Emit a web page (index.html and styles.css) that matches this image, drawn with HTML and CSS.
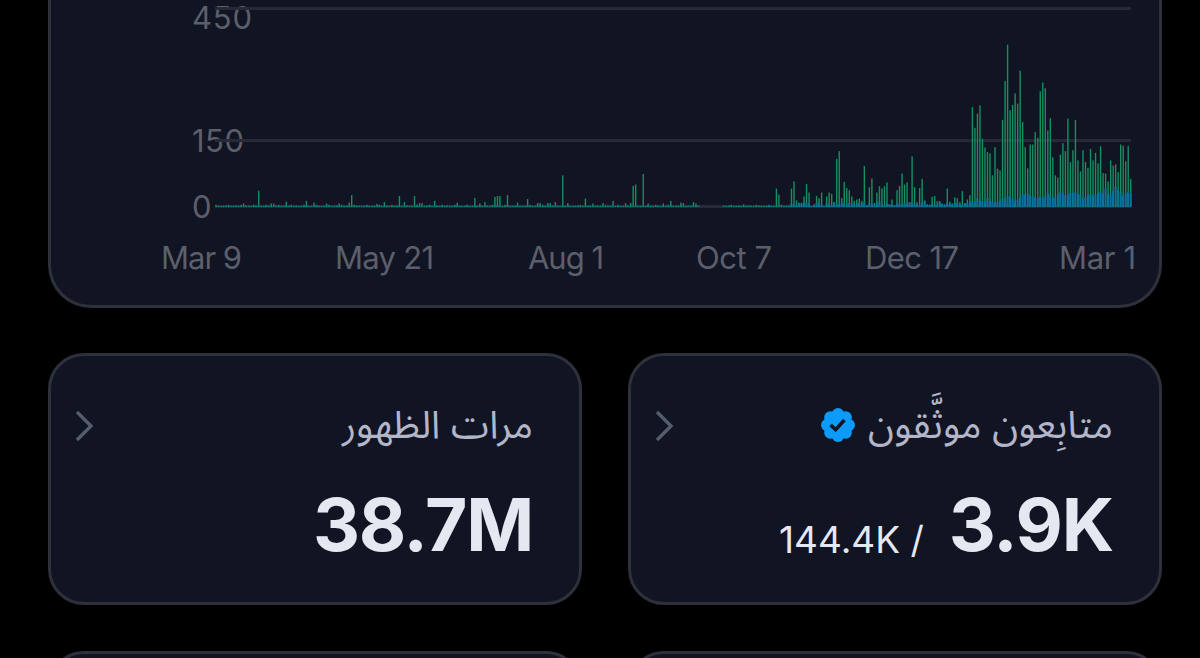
FILE: index.html
```html
<!DOCTYPE html>
<html lang="ar">
	<head>
		<meta charset="UTF-8">
		<meta name="viewport" content="width=device-width, initial-scale=1.0">
		<title>Analytics</title>
		<link rel="stylesheet" href="styles.css">
	</head>
	<body>
		<div class="chart-card">
			<svg class="chart" width="1108" height="305" viewBox="51 0 1108 305">
				<g class="axis-label">
					<text x="192" y="28.5" textLength="60">450</text>
					<text x="192" y="152" textLength="52">150</text>
					<text x="192" y="218" textLength="20">0</text>
					<text x="161" y="269" textLength="81">Mar 9</text>
					<text x="335" y="269" textLength="99">May 21</text>
					<text x="528" y="269" textLength="76">Aug 1</text>
					<text x="696" y="269" textLength="76">Oct 7</text>
					<text x="865" y="269" textLength="94">Dec 17</text>
					<text x="1059" y="269" textLength="77">Mar 1</text>
				</g>
				<g class="grid">
					<path d="M215 8.5H1131M215 140.5H1131M215 206.5H1131"/>
				</g>
				<g id="bars"></g>
			</svg>
		</div>
		<div class="cards">
			<div class="card">
				<div class="card-head">
					<svg class="chevron" width="20" height="32" viewBox="0 0 20 32"><path d="M2 2L16 16L2 30"/></svg>
					<div class="card-title" dir="rtl"><span>مرات الظهور</span></div>
				</div>
				<div class="card-value"><span class="big">38.7M</span></div>
			</div>
			<div class="card">
				<div class="card-head">
					<svg class="chevron" width="20" height="32" viewBox="0 0 20 32"><path d="M2 2L16 16L2 30"/></svg>
					<div class="card-title" dir="rtl">
						<span>متابِعون موثَّقون</span>
						<svg class="badge" width="34" height="34" viewBox="0 0 34 34">
							<g class="badge-shape">
								<circle cx="17" cy="17" r="14.6"/>
								<circle cx="17" cy="6" r="6"/>
								<circle cx="24.8" cy="9.2" r="6"/>
								<circle cx="28" cy="17" r="6"/>
								<circle cx="24.8" cy="24.8" r="6"/>
								<circle cx="17" cy="28" r="6"/>
								<circle cx="9.2" cy="24.8" r="6"/>
								<circle cx="6" cy="17" r="6"/>
								<circle cx="9.2" cy="9.2" r="6"/>
							</g>
							<path class="badge-check" d="M9.6 17L14.6 21.6L23.4 12"/>
						</svg>
					</div>
				</div>
				<div class="card-value"><span class="small">144.4K /</span><span class="big">3.9K</span></div>
			</div>
			<div class="card"></div>
			<div class="card"></div>
		</div>
		<script>
			const DAYS = 365;
			const BASE = 207;
			const SCALE = 0.44;  // px per follower
			
			// quiet months, only the days that stand out
			const peaks = {
				11: 8, 17: 37, 22: 8, 23: 8, 28: 12, 30: 5, 36: 14, 39: 10, 44: 8, 49: 8, 53: 10, 54: 27,
				64: 7, 67: 11, 73: 25, 75: 11, 79: 25, 81: 9, 82: 9, 87: 14, 96: 10, 103: 21, 105: 8, 107: 11,
				111: 23, 112: 25, 113: 25, 116: 27, 120: 10, 124: 18, 128: 9, 129: 9, 132: 9, 133: 9, 135: 11,
				138: 72, 140: 9, 147: 19, 150: 8, 154: 9, 158: 14, 163: 9, 165: 9, 166: 48, 167: 51, 170: 75,
				172: 8, 178: 8, 181: 14, 185: 10, 186: 9, 190: 11, 191: 8, 210: 6, 223: 42, 224: 28
			};
			
			// every day from 229 on
			const recent = [
				42, 58, 15, 10, 10, 24, 52, 33, 2, 6, 25, 20, 33, 2, 24, 33, 30, 11, 109, 127,
				20, 57, 43, 38, 24, 14, 17, 19, 14, 93, 4, 45, 65, 9, 33, 47, 42, 47, 56, 6,
				17, 4, 38, 48, 76, 51, 56, 11, 115, 45, 11, 43, 64, 15, 6, 5, 23, 25, 13, 13,
				8, 6, 42, 12, 8, 22, 20, 11, 36, 9, 17, 27,
				227, 180, 212, 231, 155, 135, 125, 122, 72, 136, 87, 83, 198, 286, 369, 220,
				232, 258, 235, 310, 193, 136, 88, 142, 142, 170, 157, 263, 283, 270, 174, 202,
				113, 72, 67, 119, 145, 127, 201, 102, 129, 198, 106, 81, 129, 102, 89, 132,
				106, 123, 99, 138, 77, 76, 58, 106, 94, 97, 79, 142, 139, 104, 139, 64
			];
			
			// lost followers, last 64 days
			const lost = [
				14, 11, 20, 14, 13, 12, 20, 14, 12, 10, 12, 14, 19, 18, 24, 24,
				18, 14, 17, 22, 30, 28, 31, 27, 24, 22, 20, 24, 20, 25, 31, 28,
				22, 20, 29, 34, 32, 27, 27, 33, 33, 33, 30, 28, 18, 22, 28, 29,
				26, 27, 32, 34, 31, 42, 30, 27, 36, 46, 39, 33, 25, 31, 34, 31
			];
			
			function gained(i) {
				if (i >= 229) return recent[i - 229];
				if (peaks[i]) return peaks[i];
				return i > 192 && i < 202 ? 0 : 3 + (i * 7 % 5 === 0 ? 2 : 0);
			}
			
			function lostOn(i) {
				if (i >= 301) return lost[i - 301];
				if (i >= 229) return 4 + (i * 5 % 7) + (i % 6 === 0 ? 5 : 0);
				return i < 3 || (i > 192 && i < 202) ? 0 : (i * 11 % 4 === 0 ? 4 : 1);
			}
			
			function bar(cls, x, width, value) {
				const h = value * SCALE;
				return `<rect class="${cls}" x="${x}" y="${BASE - h}" width="${width}" height="${h}"/>`;
			}
			
			let out = '';
			for (let i = 0; i < DAYS; i++) {
				const x = 215.3 + i * 2.513;
				out += bar('gained', x, 1.4, gained(i));
				out += bar('lost', x - 0.4, 2, Math.min(lostOn(i), gained(i)));
			}
			document.getElementById('bars').innerHTML = out;
		</script>
	</body>
</html>
```
FILE: styles.css
```css
body {
	margin: 0;
	padding: 0 38px 0 48px;
	height: 658px;
	overflow: hidden;
	box-sizing: border-box;
	background: #000;
	font-family: Inter, "Noto Sans Arabic", "DejaVu Sans", sans-serif;
}
.chart-card {
	box-sizing: border-box;
	height: 308px;
	border: 3px solid #2e313b;
	border-top: 0;
	border-radius: 0 0 43px 43px;
	background: #111422;
	overflow: hidden;
}
.chart {
	display: block;
}
.axis-label {
	font-size: 31px;
	fill: #5c5f6b;
}
.grid path {
	stroke: #272a36;
	stroke-width: 3;
}
.gained {
	fill: #159060;
}
.lost {
	fill: #0874a0;
}
.cards {
	display: grid;
	grid-template-columns: 534px 534px;
	grid-template-rows: 252px 252px;
	gap: 46px;
	height: 305px;
	margin-top: 45px;
	overflow: hidden;
}
.card {
	box-sizing: border-box;
	border: 3px solid #2e313b;
	border-radius: 36px;
	background: #111422;
	padding: 37px 46px 0 24px;
}
.card-head {
	display: flex;
	align-items: center;
	justify-content: space-between;
	height: 64px;
}
.chevron {
	margin-top: 1px;
	fill: none;
	stroke: #565c6b;
	stroke-width: 3.4;
}
.card-title {
	display: flex;
	align-items: center;
	gap: 13px;
	color: #b3b5c8;
	font-size: 38.5px;
	line-height: 60px;
	padding-bottom: 3px;
	white-space: nowrap;
}
.badge {
	margin-top: 2px;
}
.badge-shape {
	fill: #0c9bf9;
}
.badge-check {
	fill: none;
	stroke: #111422;
	stroke-width: 3.6;
}
.card-value {
	display: flex;
	align-items: flex-end;
	justify-content: flex-end;
	gap: 25px;
	margin-top: 23px;
	color: #e5e8f1;
	white-space: nowrap;
}
.big {
	font-size: 73px;
	font-weight: 700;
	line-height: 90px;
	letter-spacing: -1.2px;
}
.small {
	font-size: 37px;
	line-height: 60px;
}
```
